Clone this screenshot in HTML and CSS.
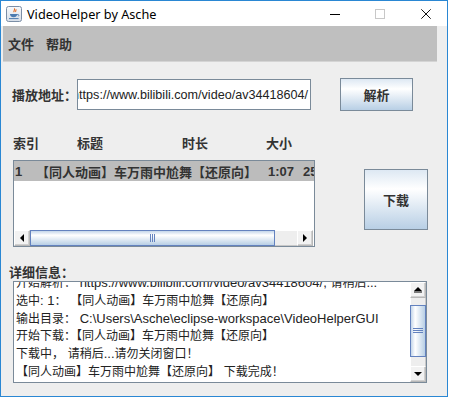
FILE: index.html
```html
<!DOCTYPE html>
<html lang="zh">
<head>
<meta charset="utf-8">
<title>VideoHelper by Asche</title>
<link rel="stylesheet" href="styles.css">
</head>
<body>
<div class="window">
  <div class="titlebar">
    <svg class="app-icon" width="16" height="16" viewBox="0 0 16 16">
      <defs>
        <linearGradient id="ig" x1="0" y1="0" x2="0" y2="1">
          <stop offset="0" stop-color="#f7f9fb"/>
          <stop offset="1" stop-color="#d6dee8"/>
        </linearGradient>
      </defs>
      <rect x="0.5" y="0.5" width="15" height="15" rx="2" fill="url(#ig)" stroke="#7b8ea6"/>
      <path d="M8.2 2.5c1.6 1.2-1.4 2.2 0 3.6M9.8 3.4c0.9 0.8-0.9 1.4 0.1 2.4" fill="none" stroke="#e2661b" stroke-width="1.1"/>
      <path d="M4 8h7.2c0 2-1 3.2-3.6 3.2S4 10 4 8z" fill="#4b7bb0"/>
      <path d="M11 8.6h1.2c0.9 0 0.9 1.6-0.3 1.6" fill="none" stroke="#4b7bb0" stroke-width="0.9"/>
      <path d="M3 12.6h9.6" stroke="#4b7bb0" stroke-width="1"/>
    </svg>
    <span class="title">VideoHelper by Asche</span>
    <div class="controls">
      <svg class="ctl" width="10" height="10" viewBox="0 0 10 10"><path d="M0 5.5h10" stroke="#000" stroke-width="1"/></svg>
      <svg class="ctl" width="10" height="10" viewBox="0 0 10 10"><rect x="0.5" y="0.5" width="9" height="9" fill="none" stroke="#c8c8c8"/></svg>
      <svg class="ctl" width="10" height="10" viewBox="0 0 10 10"><path d="M0.3 0.3L9.7 9.7M9.7 0.3L0.3 9.7" stroke="#111" stroke-width="1"/></svg>
    </div>
  </div>
  <div class="client">
    <div class="menubar">
      <span class="menu">文件</span>
      <span class="menu">帮助</span>
    </div>

    <div class="url-row">
      <span class="label">播放地址：</span>
      <div class="field"><span class="field-text">https://www.bilibili.com/video/av34418604/</span></div>
      <div class="btn parse">解析</div>
    </div>

    <div class="mid">
      <div class="list-col">
        <div class="headers">
          <span class="h h-idx">索引</span>
          <span class="h h-title">标题</span>
          <span class="h h-dur">时长</span>
          <span class="h h-size">大小</span>
        </div>
        <div class="table">
          <div class="rows">
            <div class="row selected">
              <span class="c c-idx">1</span>
              <span class="c c-title">【同人动画】车万雨中尬舞【还原向】</span>
              <span class="c c-dur">1:07</span>
              <span class="c c-size">25.4M</span>
            </div>
          </div>
          <div class="hscroll">
            <div class="sbtn"><svg width="16" height="16" viewBox="0 0 16 16"><path d="M6 8l4-4v8z" fill="#000"/></svg></div>
            <div class="hthumb"><svg width="8" height="8" viewBox="0 0 8 8"><path d="M1.5 0v8M3.5 0v8M5.5 0v8" stroke="#6382bf" stroke-width="1"/></svg></div>
            <div class="htrack"></div>
            <div class="sbtn"><svg width="16" height="16" viewBox="0 0 16 16"><path d="M10 8l-4-4v8z" fill="#000"/></svg></div>
          </div>
        </div>
      </div>
      <div class="btn download">下载</div>
    </div>

    <div class="detail-label">详细信息：</div>
    <div class="textarea">
      <div class="text">
        <div class="lines">
          <div class="line">开始解析：<span class="lat"> https://www.bilibili.com/video/av34418604/, </span>请稍后<span class="lat">...</span></div>
          <div class="line">选中<span class="lat">: 1</span>：<span class="lat"> </span>【同人动画】车万雨中尬舞【还原向】</div>
          <div class="line">输出目录：<span class="lat"> C:\Users\Asche\eclipse-workspace\VideoHelperGUI</span></div>
          <div class="line">开始下载：【同人动画】车万雨中尬舞【还原向】</div>
          <div class="line">下载中，<span class="lat"> </span>请稍后<span class="lat">...</span>请勿关闭窗口！</div>
          <div class="line">【同人动画】车万雨中尬舞【还原向】<span class="lat"> </span>下载完成！</div>
        </div>
      </div>
      <div class="vscroll">
        <div class="sbtn"><svg width="16" height="16" viewBox="0 0 16 16"><path d="M8 5l4 4H4z" fill="#000"/><path d="M4 10h8" stroke="#000"/></svg></div>
        <div class="vgap-top"></div>
        <div class="vthumb"><svg width="10" height="8" viewBox="0 0 10 8"><path d="M0 1.5h10M0 3.5h10M0 5.5h10" stroke="#6382bf" stroke-width="1"/></svg></div>
        <div class="vgap-bottom"></div>
        <div class="sbtn"><svg width="16" height="16" viewBox="0 0 16 16"><path d="M4 6h8l-4 4z" fill="#000"/></svg></div>
      </div>
    </div>
  </div>
</div>
</body>
</html>
```
FILE: styles.css
```css
* { box-sizing: border-box; }

body {
  margin: 0;
  background: #ffffff;
  font-family: "Liberation Sans", "Noto Sans CJK SC", sans-serif;
  color: #333333;
}

.window {
  width: 448px;
  height: 397px;
  border: 1px solid #2a87d3;
  background: #eeeeee;
  display: flex;
  flex-direction: column;
}

.titlebar {
  height: 25px;
  background: #ffffff;
  display: flex;
  align-items: center;
}

.app-icon {
  margin-left: 5px;
  flex: none;
}

.title {
  margin-left: 5px;
  font-family: "Noto Sans", "Liberation Sans", sans-serif;
  font-size: 12.7px;
  color: #000000;
}

.controls {
  margin-left: auto;
  margin-right: 16px;
  display: flex;
  align-items: center;
  gap: 35px;
}

.ctl { display: block; }
.ctl + .ctl + .ctl { margin-left: 1px; }

.client {
  flex: 1;
  background: #eeeeee;
}

.menubar {
  margin-left: 2px;
  width: 434px;
  height: 36px;
  background: #bfbfbf;
  border-bottom: 1px solid #d4d4d4;
  display: flex;
  align-items: center;
  padding-left: 5px;
  gap: 12px;
}

.menu {
  font-family: "Noto Sans CJK SC", sans-serif;
  font-weight: bold;
  font-size: 13px;
  color: #333333;
}

.label, .h, .detail-label, .btn {
  font-family: "Noto Sans CJK SC", sans-serif;
  font-weight: bold;
  font-size: 13px;
  color: #333333;
}

.url-row {
  margin-top: 16px;
  height: 33px;
  display: flex;
  align-items: center;
}

.label {
  margin-left: 11px;
  width: 65px;
}

.field {
  width: 234px;
  height: 31px;
  background: #ffffff;
  border: 1px solid #7a8a99;
  display: flex;
  align-items: center;
  justify-content: flex-end;
  overflow: hidden;
  padding-right: 2px;
}

.field-text {
  white-space: nowrap;
  font-family: "Liberation Sans", sans-serif;
  font-size: 12.6px;
  color: #222222;
}

.btn {
  display: flex;
  align-items: center;
  justify-content: center;
  border: 1px solid #7a8a99;
  background: linear-gradient(to bottom, #dde8f3 0%, #ffffff 32%, #b8cfe5 100%);
}

.parse {
  margin-left: 29px;
  width: 73px;
  height: 33px;
}

.mid {
  margin-top: 24px;
  display: flex;
  align-items: flex-start;
}

.list-col {
  margin-left: 12px;
}

.headers {
  height: 16px;
  line-height: 16px;
  display: flex;
  margin-bottom: 9px;
}

.h-idx { width: 64px; }
.h-title { width: 105px; }
.h-dur { width: 84px; }

.table {
  width: 302px;
  height: 87px;
  border: 1px solid #7a8a99;
  background: #ffffff;
  display: flex;
  flex-direction: column;
}

.rows { flex: 1; }

.row {
  height: 20px;
  display: flex;
  align-items: center;
  white-space: nowrap;
  overflow: hidden;
  font-weight: bold;
  font-size: 13px;
  color: #333333;
}

.row.selected { background: #bcbcbc; }

.c-idx { width: 22px; padding-left: 1px; flex: none; }
.c-title { width: 232px; flex: none; overflow: hidden; }
.c-dur { width: 35px; flex: none; }
.c-size { flex: none; }

.hscroll {
  height: 16px;
  display: flex;
  margin-right: 1px;
  background: #eeeeee;
}

.sbtn {
  width: 16px;
  height: 16px;
  flex: none;
  background: #f2f2f2;
  border: 1px solid #b8b8b8;
  border-top-color: #ffffff;
  border-left-color: #ffffff;
  box-shadow: inset -1px -1px 0 #d0d0d0;
  display: flex;
  align-items: center;
  justify-content: center;
}

.sbtn svg { display: block; flex: none; }

.hthumb {
  width: 245px;
  border: 1px solid #6382bf;
  background: linear-gradient(to bottom, #c4d6ea 0%, #ffffff 30%, #b8cfe5 100%);
  display: flex;
  align-items: center;
  justify-content: center;
}

.htrack {
  flex: 1;
  border-top: 1px solid #ffffff;
  border-bottom: 1px solid #c8c8c8;
  background: #eeeeee;
}

.download {
  margin-left: 49px;
  margin-top: 34px;
  width: 64px;
  height: 61px;
}

.detail-label {
  margin-top: 17px;
  margin-left: 8px;
  height: 16px;
  line-height: 16px;
}

.textarea {
  margin-top: 1px;
  margin-left: 12px;
  width: 414px;
  height: 102px;
  border: 1px solid #7a8a99;
  background: #ffffff;
  display: flex;
}

.text {
  flex: 1;
  overflow: hidden;
  padding-left: 2px;
}

.lines {
  margin-top: -9px;
}

.line {
  height: 17.8px;
  line-height: 17.8px;
  white-space: nowrap;
  font-family: "Noto Sans CJK SC", sans-serif;
  font-size: 12px;
  color: #222222;
}

.lat {
  font-family: "Liberation Sans", sans-serif;
  font-size: 13px;
  white-space: pre;
}

.vscroll {
  width: 16px;
  display: flex;
  flex-direction: column;
  background: #eeeeee;
}

.vgap-top { height: 7px; border-left: 1px solid #ffffff; border-right: 1px solid #c8c8c8; }
.vgap-bottom { flex: 1; border-left: 1px solid #ffffff; border-right: 1px solid #c8c8c8; }

.vthumb {
  height: 52px;
  border: 1px solid #6382bf;
  background: linear-gradient(to right, #c4d6ea 0%, #ffffff 30%, #b8cfe5 100%);
  display: flex;
  align-items: center;
  justify-content: center;
}

.vthumb svg { display: block; }
```
